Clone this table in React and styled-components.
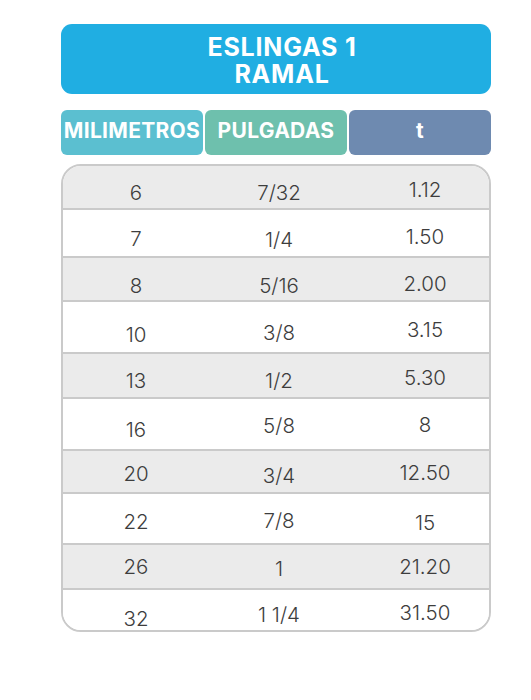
import React from "react";
import styled, { createGlobalStyle } from "styled-components";

const Global = createGlobalStyle`
  body {
    margin: 0;
    background: #fff;
    font-family: Inter, "Noto Sans", "DejaVu Sans", sans-serif;
  }
`;

const Page = styled.div`
  width: 430px;
  padding: 24px 0 0 61px;
`;

const Title = styled.div`
  height: 70px;
  border-radius: 11px;
  background: #20aee2;
  color: #fff;
  font-weight: 700;
  font-size: 25px;
  letter-spacing: 0.8px;
  line-height: 27px;
  display: flex;
  flex-direction: column;
  align-items: center;
  justify-content: center;
  padding: 4px 0 0 12px;
  box-sizing: border-box;
`;

const HeadRow = styled.div`
  display: grid;
  grid-template-columns: 142px 142px 1fr;
  gap: 2px;
  margin-top: 16px;
  height: 45px;
`;

const HeadCell = styled.div`
  background: ${(p) => p.bg};
  border-radius: 6px;
  color: #fff;
  font-weight: 700;
  font-size: 21px;
  letter-spacing: 0.3px;
  display: flex;
  align-items: center;
  justify-content: center;
  padding-bottom: 5px;
  box-sizing: border-box;
  white-space: nowrap;
`;

const Table = styled.div`
  margin-top: 9px;
  border: 2px solid #cacaca;
  border-radius: 20px;
  overflow: hidden;
`;

const Row = styled.div`
  display: grid;
  grid-template-columns: 146px 140px 1fr;
  height: ${(p) => p.h}px;
  box-sizing: border-box;
  background: ${(p) => (p.shade ? "#ebebeb" : "#fff")};
  border-top: ${(p) => (p.first ? "none" : "2px solid #cacaca")};
`;

const Cell = styled.div`
  display: flex;
  align-items: center;
  justify-content: center;
  padding-top: ${(p) => p.dy * 2}px;
  padding-left: ${(p) => p.dx || 0}px;
  font-size: 20.5px;
  font-weight: 300;
  color: #3d3d3d;
`;

const rows = [
  { h: 42, v: ["6", "7/32", "1.12"], dy: [5, 5, 2] },
  { h: 48, v: ["7", "1/4", "1.50"], dy: [5, 6, 3] },
  { h: 44, v: ["8", "5/16", "2.00"], dy: [6, 6, 4] },
  { h: 52, v: ["10", "3/8", "3.15"], dy: [7, 5, 2] },
  { h: 45, v: ["13", "1/2", "5.30"], dy: [5, 5, 2] },
  { h: 52, v: ["16", "5/8", "8"], dy: [5, 1, 0] },
  { h: 43, v: ["20", "3/4", "12.50"], dy: [2, 4, 1] },
  { h: 51, v: ["22", "7/8", "15"], dy: [3, 2, 4] },
  { h: 45, v: ["26", "1", "21.20"], dy: [0, 2, 0] },
  { h: 42, v: ["32", "1 1/4", "31.50"], dy: [8, 4, 2] },
];

export default function App() {
  return (
    <Page>
      <Global />
      <Title>
        <span>ESLINGAS 1</span>
        <span>RAMAL</span>
      </Title>
      <HeadRow>
        <HeadCell bg="#5bbfd0">MILIMETROS</HeadCell>
        <HeadCell bg="#6ec0ad">PULGADAS</HeadCell>
        <HeadCell bg="#6e8ab0">t</HeadCell>
      </HeadRow>
      <Table>
        {rows.map((r, i) => (
          <Row key={i} h={r.h} shade={i % 2 === 0} first={i === 0}>
            {r.v.map((t, j) => (
              <Cell key={j} dy={r.dy[j]} dx={j === 2 ? 12 : 0}>
                {t}
              </Cell>
            ))}
          </Row>
        ))}
      </Table>
    </Page>
  );
}
